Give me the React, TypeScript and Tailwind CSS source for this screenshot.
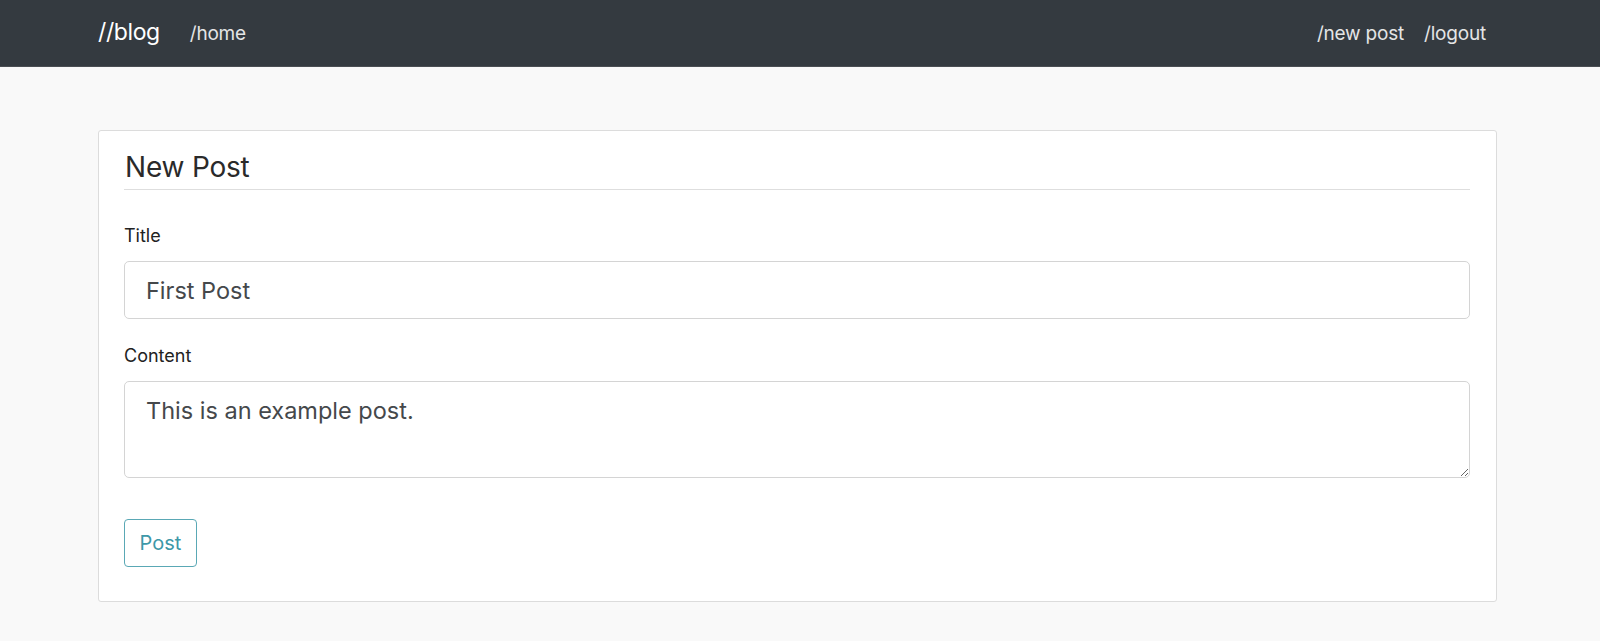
import { useState } from "react";

const font = { fontFamily: "Inter, 'Noto Sans', sans-serif" };

function Navbar() {
  return (
    <nav className="h-[67px] bg-[#343a40] border-b border-[#4a4e53] flex items-center pl-[98px] pr-[114px]">
      <a href="#" className="text-[23px] text-white leading-none tracking-[-0.4px] pb-[2px]">
        //blog
      </a>
      <a href="#" className="ml-[30px] text-[19px] text-[#e4e5e6] leading-none tracking-[-0.2px]">
        /home
      </a>
      <div className="ml-auto flex items-center gap-[20px] text-[19px] text-[#e4e5e6] leading-none tracking-[-0.2px]">
        <a href="#">/new post</a>
        <a href="#">/logout</a>
      </div>
    </nav>
  );
}

export default function App() {
  const [title, setTitle] = useState("First Post");
  const [content, setContent] = useState("This is an example post.");

  return (
    <div className="min-h-[641px] bg-[#f9f9f9]" style={font}>
      <Navbar />
      <div className="pl-[98px] pr-[103px] pt-[63px]">
        <div className="bg-white border border-[#dcdcdc] rounded-[3px] pt-[19px] pb-[34px] pl-[25px] pr-[26px]">
          <h3 className="text-[28px] leading-[35px] text-[#2a2a2a] pl-[1px] pb-[4px] border-b border-[#dedede] tracking-[-0.2px]">
            New Post
          </h3>
          <form className="mt-[32px]" onSubmit={(e) => e.preventDefault()}>
            <label className="block text-[18px] leading-[27px] text-[#222] mb-[12px]">Title</label>
            <input
              value={title}
              onChange={(e) => setTitle(e.target.value)}
              className="block w-full h-[58px] px-[21px] text-[23.5px] text-[#45484b] border border-[#d4d4d4] rounded-[5px] outline-none"
            />
            <label className="block text-[18px] leading-[27px] text-[#222] mt-[23px] mb-[12px]">Content</label>
            <textarea
              value={content}
              onChange={(e) => setContent(e.target.value)}
              className="block w-full h-[97px] py-[11px] px-[21px] text-[23.5px] leading-[36px] text-[#45484b] border border-[#d4d4d4] rounded-[5px] outline-none"
            />
            <button
              type="submit"
              className="mt-[41px] w-[73px] h-[48px] text-[20px] text-[#3d98a8] border border-[#5aa8b5] rounded-[4px] bg-white"
            >
              Post
            </button>
          </form>
        </div>
      </div>
    </div>
  );
}
